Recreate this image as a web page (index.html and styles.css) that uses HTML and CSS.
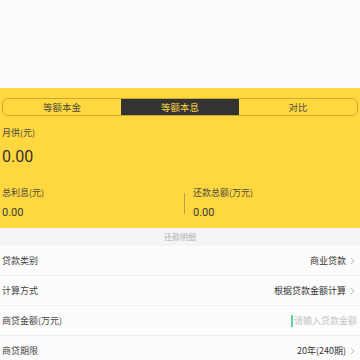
FILE: index.html
```html
<!DOCTYPE html>
<html lang="zh">
<head>
<meta charset="utf-8">
<link rel="stylesheet" href="styles.css">
</head>
<body>
<div class="top"></div>
<div class="panel">
  <div class="seg">
    <div class="seg-item">等额本金</div>
    <div class="seg-item active">等额本息</div>
    <div class="seg-item">对比</div>
  </div>
  <div class="label monthly-label">月供(元)</div>
  <div class="big">0.00</div>
  <div class="stats">
    <div class="col left">
      <div class="label">总利息(元)</div>
      <div class="small">0.00</div>
    </div>
    <div class="vline"></div>
    <div class="col right">
      <div class="label">还款总额(万元)</div>
      <div class="small">0.00</div>
    </div>
  </div>
</div>
<div class="band">还款明细</div>
<div class="rows">
  <div class="row">
    <span class="name">贷款类别</span>
    <span class="val">商业贷款<svg class="chev" width="5" height="8" viewBox="0 0 5 8"><polyline points="1,1 4,4 1,7" fill="none" stroke="#b8b8b8" stroke-width="1"/></svg></span>
  </div>
  <div class="row">
    <span class="name">计算方式</span>
    <span class="val">根据贷款金额计算<svg class="chev" width="5" height="8" viewBox="0 0 5 8"><polyline points="1,1 4,4 1,7" fill="none" stroke="#b8b8b8" stroke-width="1"/></svg></span>
  </div>
  <div class="row">
    <span class="name">商贷金额(万元)</span>
    <span class="val input"><span class="cursor"></span>请输入贷款金额</span>
  </div>
  <div class="row">
    <span class="name">商贷期限</span>
    <span class="val">20年(240期)<svg class="chev" width="5" height="8" viewBox="0 0 5 8"><polyline points="1,1 4,4 1,7" fill="none" stroke="#b8b8b8" stroke-width="1"/></svg></span>
  </div>
</div>
</body>
</html>
```
FILE: styles.css
```css
html, body {
  margin: 0;
  padding: 0;
}
body {
  width: 360px;
  height: 360px;
  overflow: hidden;
  background: #fcfcfc;
  font-family: "Noto Sans CJK SC", "Noto Sans", sans-serif;
  color: #333;
}
.top {
  height: 88px;
  background: #fafcfb;
}
.panel {
  background: #ffd83f;
  padding: 10px 2px 8px;
}
.seg {
  height: 18px;
  box-sizing: border-box;
  border: 1px solid #c9ab34;
  border-radius: 6px;
  display: grid;
  grid-template-columns: 1fr 1fr 1fr;
  overflow: hidden;
}
.seg-item {
  font-size: 9.5px;
  line-height: 16px;
  text-align: center;
  color: #4a4a3a;
}
.seg-item.active {
  background: #333333;
  color: #ffd83f;
}
.label {
  font-size: 9px;
  line-height: 12px;
  color: #4a4a40;
}
.monthly-label {
  margin-top: 11px;
}
.big {
  margin-top: 8px;
  font-family: Roboto, "Noto Sans", sans-serif;
  font-size: 16px;
  line-height: 20px;
  color: #333;
}
.stats {
  margin-top: 20px;
  display: flex;
  align-items: center;
}
.col.left {
  width: 182px;
}
.col.right {
  padding-left: 8px;
}
.vline {
  width: 1px;
  height: 21px;
  background: #b9a04a;
}
.small {
  margin-top: 7px;
  font-family: Roboto, "Noto Sans", sans-serif;
  font-size: 11px;
  line-height: 14px;
  color: #3a3a3a;
}
.band {
  height: 18px;
  background: #f4f4f4;
  font-size: 8px;
  line-height: 18px;
  text-align: center;
  color: #b0b0b0;
}
.rows {
  background: #fcfcfc;
}
.row {
  height: 30px;
  box-sizing: border-box;
  border-bottom: 1px solid #efefef;
  display: flex;
  align-items: center;
  justify-content: space-between;
  padding: 0 5px 0 2px;
  font-size: 9px;
}
.name {
  color: #444;
}
.val {
  display: flex;
  align-items: center;
  color: #333;
}
.chev {
  margin-left: 4px;
}
.val.input {
  color: #c4c4c4;
  margin-right: -2px;
}
.cursor {
  width: 2px;
  height: 12px;
  background: #5fd39a;
  margin-right: 1px;
}
```
